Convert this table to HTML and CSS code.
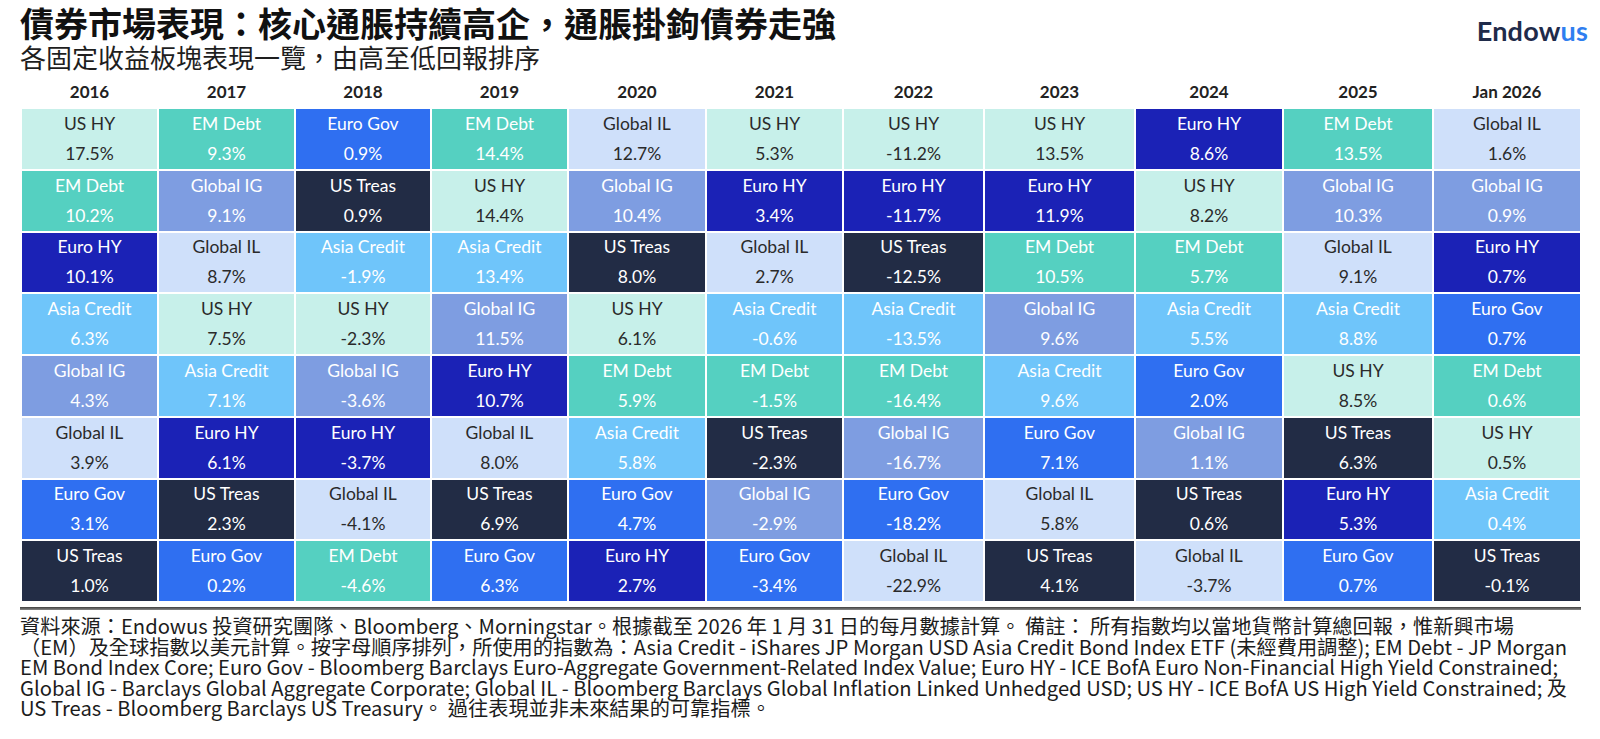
FILE: index.html
```html
<!DOCTYPE html>
<html lang="zh-Hant">
<head>
<meta charset="utf-8">
<title>債券市場表現</title>
<link rel="stylesheet" href="styles.css">
</head>
<body>
<div class="page">
  <header class="head">
    <div class="titles">
      <h1 class="title">債券市場表現：核心通脹持續高企，通脹掛鉤債券走強</h1>
      <p class="subtitle">各固定收益板塊表現一覽，由高至低回報排序</p>
    </div>
    <div class="logo"><span class="logo-a">Endow</span><span class="logo-b">us</span></div>
  </header>

  <div class="grid">
    <div class="year">2016</div>
    <div class="cell ushy"><span>US HY</span><span>17.5%</span></div>
    <div class="cell em"><span>EM Debt</span><span>10.2%</span></div>
    <div class="cell eurohy"><span>Euro HY</span><span>10.1%</span></div>
    <div class="cell asia"><span>Asia Credit</span><span>6.3%</span></div>
    <div class="cell gig"><span>Global IG</span><span>4.3%</span></div>
    <div class="cell gil"><span>Global IL</span><span>3.9%</span></div>
    <div class="cell eurogov"><span>Euro Gov</span><span>3.1%</span></div>
    <div class="cell ust"><span>US Treas</span><span>1.0%</span></div>

    <div class="year">2017</div>
    <div class="cell em"><span>EM Debt</span><span>9.3%</span></div>
    <div class="cell gig"><span>Global IG</span><span>9.1%</span></div>
    <div class="cell gil"><span>Global IL</span><span>8.7%</span></div>
    <div class="cell ushy"><span>US HY</span><span>7.5%</span></div>
    <div class="cell asia"><span>Asia Credit</span><span>7.1%</span></div>
    <div class="cell eurohy"><span>Euro HY</span><span>6.1%</span></div>
    <div class="cell ust"><span>US Treas</span><span>2.3%</span></div>
    <div class="cell eurogov"><span>Euro Gov</span><span>0.2%</span></div>

    <div class="year">2018</div>
    <div class="cell eurogov"><span>Euro Gov</span><span>0.9%</span></div>
    <div class="cell ust"><span>US Treas</span><span>0.9%</span></div>
    <div class="cell asia"><span>Asia Credit</span><span>-1.9%</span></div>
    <div class="cell ushy"><span>US HY</span><span>-2.3%</span></div>
    <div class="cell gig"><span>Global IG</span><span>-3.6%</span></div>
    <div class="cell eurohy"><span>Euro HY</span><span>-3.7%</span></div>
    <div class="cell gil"><span>Global IL</span><span>-4.1%</span></div>
    <div class="cell em"><span>EM Debt</span><span>-4.6%</span></div>

    <div class="year">2019</div>
    <div class="cell em"><span>EM Debt</span><span>14.4%</span></div>
    <div class="cell ushy"><span>US HY</span><span>14.4%</span></div>
    <div class="cell asia"><span>Asia Credit</span><span>13.4%</span></div>
    <div class="cell gig"><span>Global IG</span><span>11.5%</span></div>
    <div class="cell eurohy"><span>Euro HY</span><span>10.7%</span></div>
    <div class="cell gil"><span>Global IL</span><span>8.0%</span></div>
    <div class="cell ust"><span>US Treas</span><span>6.9%</span></div>
    <div class="cell eurogov"><span>Euro Gov</span><span>6.3%</span></div>

    <div class="year">2020</div>
    <div class="cell gil"><span>Global IL</span><span>12.7%</span></div>
    <div class="cell gig"><span>Global IG</span><span>10.4%</span></div>
    <div class="cell ust"><span>US Treas</span><span>8.0%</span></div>
    <div class="cell ushy"><span>US HY</span><span>6.1%</span></div>
    <div class="cell em"><span>EM Debt</span><span>5.9%</span></div>
    <div class="cell asia"><span>Asia Credit</span><span>5.8%</span></div>
    <div class="cell eurogov"><span>Euro Gov</span><span>4.7%</span></div>
    <div class="cell eurohy"><span>Euro HY</span><span>2.7%</span></div>

    <div class="year">2021</div>
    <div class="cell ushy"><span>US HY</span><span>5.3%</span></div>
    <div class="cell eurohy"><span>Euro HY</span><span>3.4%</span></div>
    <div class="cell gil"><span>Global IL</span><span>2.7%</span></div>
    <div class="cell asia"><span>Asia Credit</span><span>-0.6%</span></div>
    <div class="cell em"><span>EM Debt</span><span>-1.5%</span></div>
    <div class="cell ust"><span>US Treas</span><span>-2.3%</span></div>
    <div class="cell gig"><span>Global IG</span><span>-2.9%</span></div>
    <div class="cell eurogov"><span>Euro Gov</span><span>-3.4%</span></div>

    <div class="year">2022</div>
    <div class="cell ushy"><span>US HY</span><span>-11.2%</span></div>
    <div class="cell eurohy"><span>Euro HY</span><span>-11.7%</span></div>
    <div class="cell ust"><span>US Treas</span><span>-12.5%</span></div>
    <div class="cell asia"><span>Asia Credit</span><span>-13.5%</span></div>
    <div class="cell em"><span>EM Debt</span><span>-16.4%</span></div>
    <div class="cell gig"><span>Global IG</span><span>-16.7%</span></div>
    <div class="cell eurogov"><span>Euro Gov</span><span>-18.2%</span></div>
    <div class="cell gil"><span>Global IL</span><span>-22.9%</span></div>

    <div class="year">2023</div>
    <div class="cell ushy"><span>US HY</span><span>13.5%</span></div>
    <div class="cell eurohy"><span>Euro HY</span><span>11.9%</span></div>
    <div class="cell em"><span>EM Debt</span><span>10.5%</span></div>
    <div class="cell gig"><span>Global IG</span><span>9.6%</span></div>
    <div class="cell asia"><span>Asia Credit</span><span>9.6%</span></div>
    <div class="cell eurogov"><span>Euro Gov</span><span>7.1%</span></div>
    <div class="cell gil"><span>Global IL</span><span>5.8%</span></div>
    <div class="cell ust"><span>US Treas</span><span>4.1%</span></div>

    <div class="year">2024</div>
    <div class="cell eurohy"><span>Euro HY</span><span>8.6%</span></div>
    <div class="cell ushy"><span>US HY</span><span>8.2%</span></div>
    <div class="cell em"><span>EM Debt</span><span>5.7%</span></div>
    <div class="cell asia"><span>Asia Credit</span><span>5.5%</span></div>
    <div class="cell eurogov"><span>Euro Gov</span><span>2.0%</span></div>
    <div class="cell gig"><span>Global IG</span><span>1.1%</span></div>
    <div class="cell ust"><span>US Treas</span><span>0.6%</span></div>
    <div class="cell gil"><span>Global IL</span><span>-3.7%</span></div>

    <div class="year">2025</div>
    <div class="cell em"><span>EM Debt</span><span>13.5%</span></div>
    <div class="cell gig"><span>Global IG</span><span>10.3%</span></div>
    <div class="cell gil"><span>Global IL</span><span>9.1%</span></div>
    <div class="cell asia"><span>Asia Credit</span><span>8.8%</span></div>
    <div class="cell ushy"><span>US HY</span><span>8.5%</span></div>
    <div class="cell ust"><span>US Treas</span><span>6.3%</span></div>
    <div class="cell eurohy"><span>Euro HY</span><span>5.3%</span></div>
    <div class="cell eurogov"><span>Euro Gov</span><span>0.7%</span></div>

    <div class="year">Jan 2026</div>
    <div class="cell gil"><span>Global IL</span><span>1.6%</span></div>
    <div class="cell gig"><span>Global IG</span><span>0.9%</span></div>
    <div class="cell eurohy"><span>Euro HY</span><span>0.7%</span></div>
    <div class="cell eurogov"><span>Euro Gov</span><span>0.7%</span></div>
    <div class="cell em"><span>EM Debt</span><span>0.6%</span></div>
    <div class="cell ushy"><span>US HY</span><span>0.5%</span></div>
    <div class="cell asia"><span>Asia Credit</span><span>0.4%</span></div>
    <div class="cell ust"><span>US Treas</span><span>-0.1%</span></div>
  </div>

  <div class="rule"></div>

  <footer class="notes">
    <p class="line">資料來源：Endowus 投資研究團隊、Bloomberg、Morningstar。根據截至 2026 年 1 月 31 日的每月數據計算。 備註： 所有指數均以當地貨幣計算總回報，惟新興市場</p>
    <p class="line">（EM）及全球指數以美元計算。按字母順序排列，所使用的指數為：Asia Credit - iShares JP Morgan USD Asia Credit Bond Index ETF (未經費用調整); EM Debt - JP Morgan</p>
    <p class="line">EM Bond Index Core; Euro Gov - Bloomberg Barclays Euro-Aggregate Government-Related Index Value; Euro HY - ICE BofA Euro Non-Financial High Yield Constrained;</p>
    <p class="line">Global IG - Barclays Global Aggregate Corporate; Global IL - Bloomberg Barclays Global Inflation Linked Unhedged USD; US HY - ICE BofA US High Yield Constrained; 及</p>
    <p class="line">US Treas - Bloomberg Barclays US Treasury。 過往表現並非未來結果的可靠指標。</p>
  </footer>
</div>
</body>
</html>
```

FILE: styles.css
```css
* { box-sizing: border-box; }

html, body {
  margin: 0;
  padding: 0;
  background: #ffffff;
}

.page {
  width: 1600px;
  height: 739px;
  overflow: hidden;
  padding: 3px 12px 0 20px;
  font-family: "Noto Sans CJK TC", "Noto Sans", sans-serif;
  color: #1a1a1a;
}

.head {
  display: flex;
  justify-content: space-between;
  align-items: flex-start;
  height: 73px;
}

.title {
  margin: 0;
  font-size: 34px;
  line-height: 39px;
  font-weight: 700;
  color: #111111;
  white-space: nowrap;
}

.subtitle {
  margin: 0;
  font-size: 26px;
  line-height: 30px;
  font-weight: 400;
  color: #1e1e1e;
  white-space: nowrap;
}

.logo {
  margin-top: 12px;
  font-family: Lato, "Noto Sans", sans-serif;
  font-weight: 700;
  font-size: 27px;
  line-height: 32px;
  letter-spacing: 0.2px;
}

.logo-a { color: #1f2b4a; }
.logo-b { color: #2f7ef0; }

.grid {
  margin-left: 1px;
  width: 1560px;
  display: grid;
  grid-auto-flow: column;
  grid-template-columns: 137px 137px 136px 137px 138px 137px 141px 151px 148px 150px 148px;
  grid-template-rows: 32px repeat(8, 61.75px);
  font-family: Lato, "Liberation Sans", sans-serif;
}

.year {
  display: flex;
  align-items: center;
  justify-content: center;
  font-weight: 700;
  font-size: 17px;
  color: #222222;
  padding-bottom: 2px;
}

.cell {
  display: flex;
  flex-direction: column;
  align-items: center;
  justify-content: center;
  border: 1px solid #ffffff;
  font-size: 17.5px;
  line-height: 30px;
  color: #ffffff;
}

.ushy    { background: #c7f0ea; color: #2a2a2a; }
.em      { background: #55d0c1; }
.eurogov { background: #2f6ff1; }
.ust     { background: #222c45; }
.gig     { background: #7e9de1; }
.eurohy  { background: #1b22b6; }
.gil     { background: #cfe0fa; color: #2a2a2a; }
.asia    { background: #6fc5fa; }

.rule {
  margin: 5px 0 0 0;
  width: 1561px;
  height: 3px;
  background: linear-gradient(#3f3f3f, #8a8a8a);
}

.notes {
  margin-top: 6px;
  font-size: 20.2px;
  line-height: 20.6px;
  color: #1c1c1c;
}

.line {
  margin: 0;
  white-space: nowrap;
}
```
